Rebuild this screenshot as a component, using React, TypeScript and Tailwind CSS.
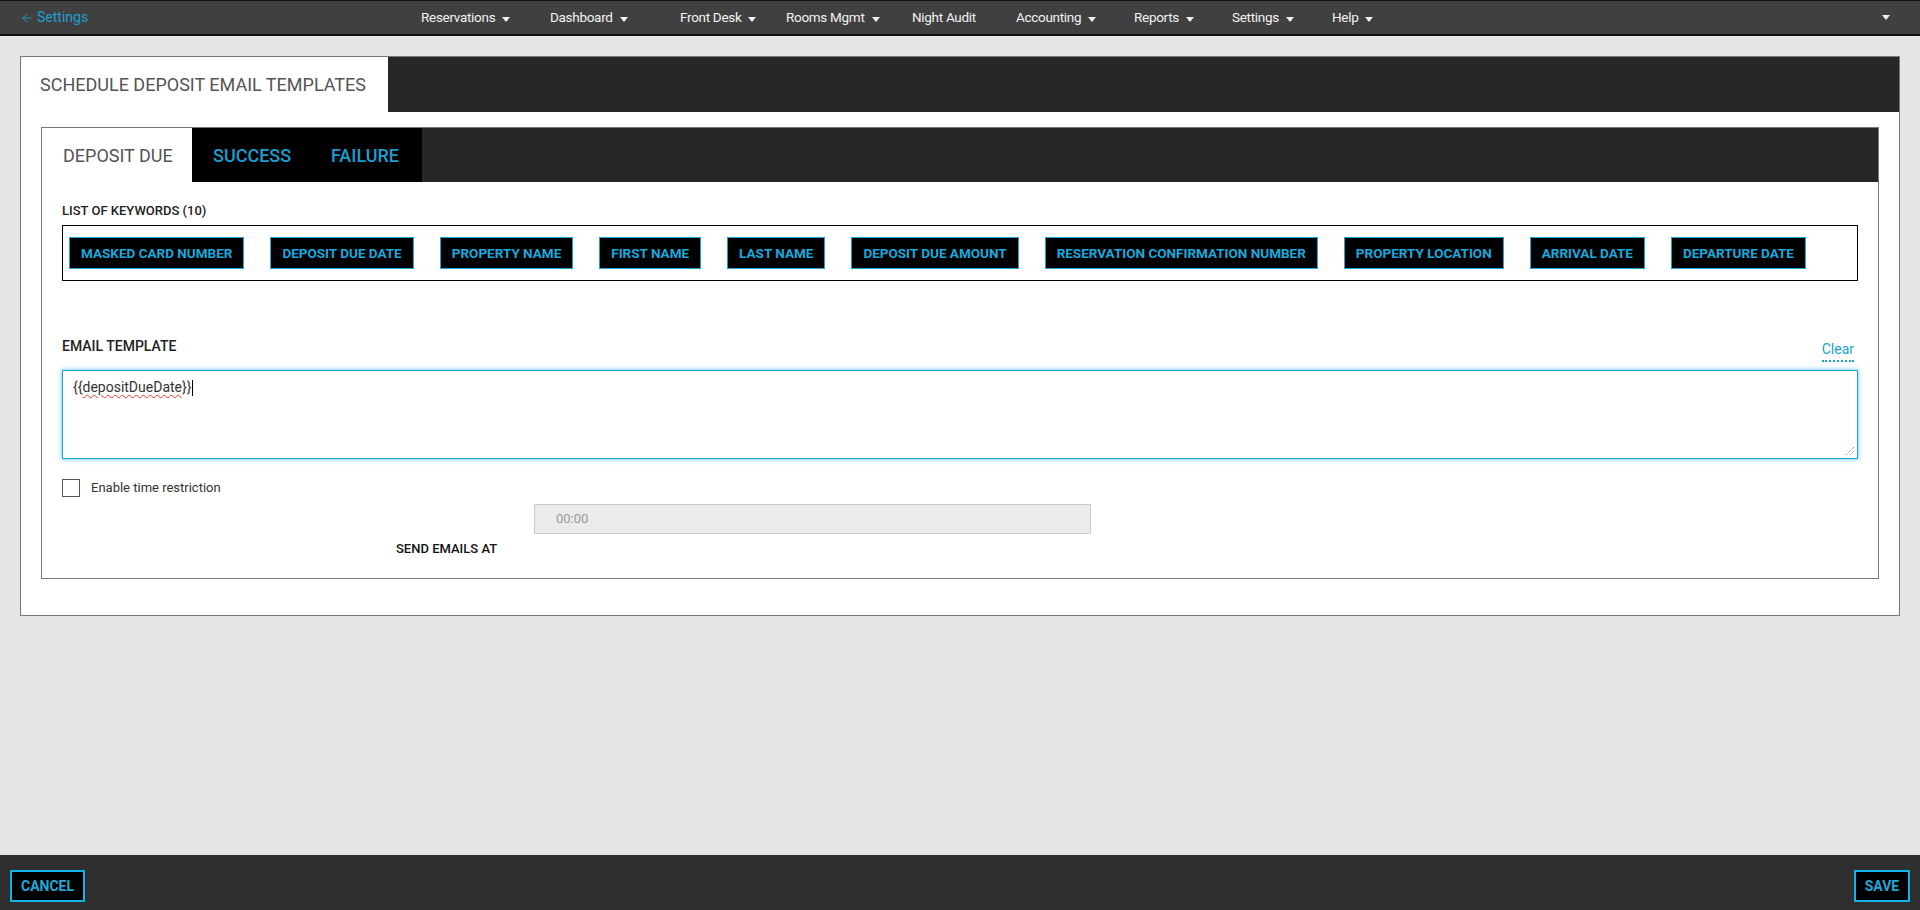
import { ArrowLeft } from 'lucide-react';

const navItems = [
  { label: 'Reservations', w: 'w-[129px]', caret: true },
  { label: 'Dashboard', w: 'w-[130px]', caret: true },
  { label: 'Front Desk', w: 'w-[106px]', caret: true },
  { label: 'Rooms Mgmt', w: 'w-[126px]', caret: true },
  { label: 'Night Audit', w: 'w-[104px]', caret: false },
  { label: 'Accounting', w: 'w-[118px]', caret: true },
  { label: 'Reports', w: 'w-[98px]', caret: true },
  { label: 'Settings', w: 'w-[100px]', caret: true },
  { label: 'Help', w: 'w-[60px]', caret: true },
];

const keywords = [
  'MASKED CARD NUMBER',
  'DEPOSIT DUE DATE',
  'PROPERTY NAME',
  'FIRST NAME',
  'LAST NAME',
  'DEPOSIT DUE AMOUNT',
  'RESERVATION CONFIRMATION NUMBER',
  'PROPERTY LOCATION',
  'ARRIVAL DATE',
  'DEPARTURE DATE',
];

function Caret() {
  return (
    <svg width="8" height="5" viewBox="0 0 8 5" className="ml-[7px] mt-[3px]">
      <path d="M0 0 L8 0 L4 5 Z" fill="#f2f2f2" />
    </svg>
  );
}

export default function App() {
  return (
    <div className="h-screen flex flex-col bg-[#e5e5e5] font-['Roboto',sans-serif]">
      {/* Top bar */}
      <div className="h-[36px] shrink-0 bg-[#404040] border-t border-b-2 border-[#111] flex items-center">
        <div className="w-[421px] pl-[20px] flex items-center gap-[3px] text-[14px] text-[#1e9fd0]">
          <ArrowLeft size={14} strokeWidth={1.5} />
          <span>Settings</span>
        </div>
        <div className="flex items-center">
          {navItems.map((item) => (
            <div key={item.label} className={`${item.w} flex items-center text-[13.5px] tracking-[-0.3px] text-[#f2f2f2]`}>
              <span>{item.label}</span>
              {item.caret && <Caret />}
            </div>
          ))}
        </div>
        <div className="flex-1" />
        <div className="pr-[30px]">
          <svg width="8" height="5" viewBox="0 0 8 5">
            <path d="M0 0 L8 0 L4 5 Z" fill="#f2f2f2" />
          </svg>
        </div>
      </div>

      {/* Main */}
      <div className="flex-1 pt-[20px] px-[20px]">
        <div className="bg-white border border-[#777]">
          <div className="flex h-[55px]">
            <div className="w-[367px] flex items-center pl-[19px] text-[18px] text-[#555]">
              SCHEDULE DEPOSIT EMAIL TEMPLATES
            </div>
            <div className="flex-1 bg-[#262626]" />
          </div>

          <div className="px-[20px] pt-[15px] pb-[36px]">
            <div className="border border-[#777]">
              {/* Tabs */}
              <div className="flex h-[54px] bg-[#262626]">
                <div className="w-[150px] bg-white flex items-center pl-[21px] text-[18px] text-[#555]">
                  DEPOSIT DUE
                </div>
                <div className="w-[230px] bg-black flex items-center pl-[21px] text-[18px] font-medium text-[#1a9fd0]">
                  <span className="w-[118px]">SUCCESS</span>
                  <span>FAILURE</span>
                </div>
              </div>

              <div className="px-[20px] pt-[22px] pb-[22px]">
                <div className="text-[13px] font-medium text-[#222] leading-[14px]">LIST OF KEYWORDS (10)</div>

                <div className="mt-[7px] border border-black h-[56px] px-[6px] flex items-center gap-[26px]">
                  {keywords.map((k) => (
                    <div
                      key={k}
                      className="h-[32px] px-[11px] flex items-center bg-black border border-[#1aa6d6] text-[13.5px] font-bold text-[#1aa9dc]"
                    >
                      {k}
                    </div>
                  ))}
                </div>

                <div className="mt-[57px] flex items-end justify-between">
                  <div className="text-[14px] font-medium text-[#222] leading-[16px] mb-[8px]">EMAIL TEMPLATE</div>
                  <div className="mr-[4px] text-[14px] text-[#22a3cc] leading-[16px] border-b-2 border-dotted border-[#1aa3cc] pb-[3px]">
                    Clear
                  </div>
                </div>

                <div className="relative mt-[8px] h-[89px] border border-[#14a4cf] shadow-[0_0_5px_rgba(26,170,220,0.7)] px-[10px] pt-[6px] text-[14px] text-[#333]">
                  <span>{'{{'}</span>
                  <span className="underline decoration-wavy decoration-[#e53935] decoration-1 underline-offset-2">depositDueDate</span>
                  <span>{'}}'}</span>
                  <span className="inline-block w-px h-[16px] bg-black align-middle ml-px" />
                  <svg width="10" height="10" viewBox="0 0 10 10" className="absolute right-[2px] bottom-[2px]">
                    <path d="M9 1 L1 9 M9 5 L5 9" stroke="#777" strokeWidth="1" strokeDasharray="1 1" />
                  </svg>
                </div>

                <div className="mt-[19px] flex items-center">
                  <div className="w-[18px] h-[18px] border border-[#555] bg-white" />
                  <span className="ml-[11px] text-[13px] text-[#333]">Enable time restriction</span>
                </div>

                <div className="mt-[6px] pl-[472px]">
                  <div className="w-[557px] h-[30px] bg-[#ebebeb] border border-[#ccc] flex items-center pl-[21px] text-[13px] text-[#999]">
                    00:00
                  </div>
                </div>

                <div className="mt-[7px] pl-[334px] text-[13px] font-medium text-[#111] leading-[15px]">SEND EMAILS AT</div>
              </div>
            </div>
          </div>
        </div>
      </div>

      {/* Bottom bar */}
      <div className="h-[55px] shrink-0 bg-[#2f2f2f] flex items-start justify-between px-[10px] pt-[15px]">
        <button className="h-[32px] w-[75px] bg-black border-2 border-[#12b3e6] text-[14px] font-bold text-[#1fa9d9]">
          CANCEL
        </button>
        <button className="h-[32px] w-[56px] bg-black border-2 border-[#12b3e6] text-[14px] font-bold text-[#1fa9d9]">
          SAVE
        </button>
      </div>
    </div>
  );
}
